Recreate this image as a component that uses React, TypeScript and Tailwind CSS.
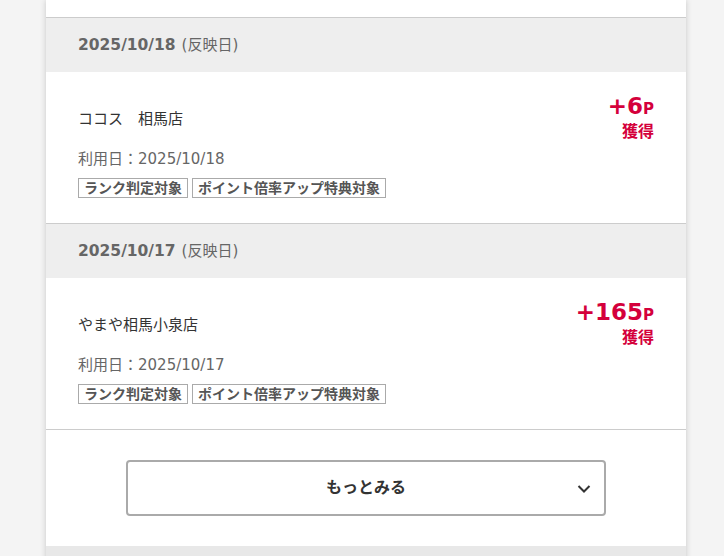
type Entry = { date: string; shop: string; use: string; pts: string };

const entries: Entry[] = [
  { date: "2025/10/18", shop: "ココス　相馬店", use: "2025/10/18", pts: "+6" },
  { date: "2025/10/17", shop: "やまや相馬小泉店", use: "2025/10/17", pts: "+165" },
];

function Tag({ children }: { children: string }) {
  return (
    <span className="border border-[#aaaaaa] px-[5px] text-[14px] font-bold leading-[18px] text-[#555555]">
      {children}
    </span>
  );
}

function Row({ e }: { e: Entry }) {
  return (
    <div>
      <div className="flex h-[54px] items-center bg-[#eeeeee] px-8 text-[#666666]">
        <p className="text-[15px] leading-[22px]">
          <span className="text-[15.5px] font-bold">{e.date}</span>
          <span className="ml-[6px]">(反映日)</span>
        </p>
      </div>
      <div className="flex justify-between border-b border-[#cccccc] bg-white px-8 pb-[25px] pt-[22px]">
        <div className="pt-[14px]">
          <p className="text-[15px] leading-[22px] text-[#333333]">{e.shop}</p>
          <p className="mt-[18px] text-[15px] leading-[22px] text-[#666666]">利用日：{e.use}</p>
          <div className="mt-[8px] flex gap-[4px]">
            <Tag>ランク判定対象</Tag>
            <Tag>ポイント倍率アップ特典対象</Tag>
          </div>
        </div>
        <div className="flex flex-col items-end text-[#d4003b]">
          <p className="text-[23px] font-bold leading-[24px]">
            {e.pts}
            <span className="text-[15px]">P</span>
          </p>
          <p className="mt-[2px] text-[16px] font-bold leading-[18px]">獲得</p>
        </div>
      </div>
    </div>
  );
}

export default function App() {
  return (
    <div
      className="min-h-[556px] bg-[#f4f4f4]"
      style={{ fontFamily: '"DejaVu Sans", "Noto Sans CJK JP", sans-serif' }}
    >
      <div className="ml-[46px] w-[640px] bg-white shadow-[0_0_6px_rgba(0,0,0,0.18)]">
        <div className="h-[18px] border-b border-[#cccccc] bg-white" />
        {entries.map((e) => (
          <Row key={e.date} e={e} />
        ))}
        <div className="flex justify-center bg-white py-[30px]">
          <button className="relative flex h-[56px] w-[480px] items-center justify-center rounded-[4px] border-2 border-[#aaaaaa] bg-white text-[16px] font-bold text-[#333333]">
            もっとみる
            <svg
              className="absolute right-[13px] top-[22px]"
              width="14"
              height="10"
              viewBox="0 0 14 10"
              fill="none"
              stroke="#333333"
              strokeWidth="2"
            >
              <path d="M1.5 2 L7 7.5 L12.5 2" />
            </svg>
          </button>
        </div>
        <div className="h-[20px] bg-[#e8e8e8]" />
      </div>
    </div>
  );
}
